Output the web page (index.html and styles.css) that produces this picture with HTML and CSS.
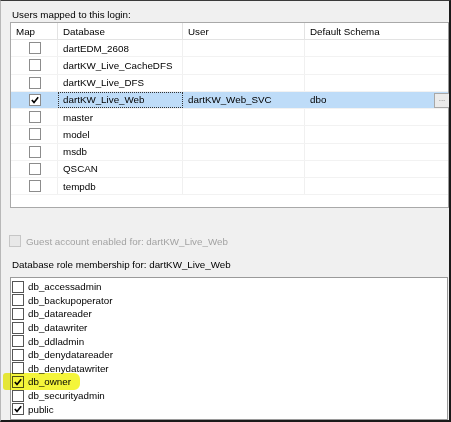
FILE: index.html
```html
<!DOCTYPE html>
<html lang="en">
<head>
    <meta charset="UTF-8">
    <title>Login Properties - User Mapping</title>
    <link rel="stylesheet" href="styles.css">
</head>
<body>
    <div class="window">
        <div class="caption">Users mapped to this login:</div>

        <!-- Mapping grid -->
        <div class="grid">
            <div class="row head">
                <div class="cell">Map</div>
                <div class="cell">Database</div>
                <div class="cell">User</div>
                <div class="cell">Default Schema</div>
            </div>
            <div class="row">
                <div class="cell map"><span class="box"></span></div>
                <div class="cell">dartEDM_2608</div>
                <div class="cell"></div>
                <div class="cell"></div>
            </div>
            <div class="row">
                <div class="cell map"><span class="box"></span></div>
                <div class="cell">dartKW_Live_CacheDFS</div>
                <div class="cell"></div>
                <div class="cell"></div>
            </div>
            <div class="row">
                <div class="cell map"><span class="box"></span></div>
                <div class="cell">dartKW_Live_DFS</div>
                <div class="cell"></div>
                <div class="cell"></div>
            </div>
            <div class="row selected">
                <div class="cell map"><span class="box"><svg viewBox="0 0 10 10"><polyline points="1.8,5 4,7.4 8.2,2.2"/></svg></span></div>
                <div class="cell focus">dartKW_Live_Web</div>
                <div class="cell">dartKW_Web_SVC</div>
                <div class="cell schema">dbo<span class="more">...</span></div>
            </div>
            <div class="row">
                <div class="cell map"><span class="box"></span></div>
                <div class="cell">master</div>
                <div class="cell"></div>
                <div class="cell"></div>
            </div>
            <div class="row">
                <div class="cell map"><span class="box"></span></div>
                <div class="cell">model</div>
                <div class="cell"></div>
                <div class="cell"></div>
            </div>
            <div class="row">
                <div class="cell map"><span class="box"></span></div>
                <div class="cell">msdb</div>
                <div class="cell"></div>
                <div class="cell"></div>
            </div>
            <div class="row">
                <div class="cell map"><span class="box"></span></div>
                <div class="cell">QSCAN</div>
                <div class="cell"></div>
                <div class="cell"></div>
            </div>
            <div class="row">
                <div class="cell map"><span class="box"></span></div>
                <div class="cell">tempdb</div>
                <div class="cell"></div>
                <div class="cell"></div>
            </div>
        </div>

        <div class="guest">
            <span class="box disabled"></span>
            <span>Guest account enabled for: dartKW_Live_Web</span>
        </div>

        <div class="caption roles-caption">Database role membership for: dartKW_Live_Web</div>

        <!-- Role list -->
        <div class="roles">
            <div class="role"><span class="box"></span><span>db_accessadmin</span></div>
            <div class="role"><span class="box"></span><span>db_backupoperator</span></div>
            <div class="role"><span class="box"></span><span>db_datareader</span></div>
            <div class="role"><span class="box"></span><span>db_datawriter</span></div>
            <div class="role"><span class="box"></span><span>db_ddladmin</span></div>
            <div class="role"><span class="box"></span><span>db_denydatareader</span></div>
            <div class="role"><span class="box"></span><span>db_denydatawriter</span></div>
            <div class="role marked"><span class="box"><svg viewBox="0 0 10 10"><polyline points="1.8,5 4,7.4 8.2,2.2"/></svg></span><span>db_owner</span></div>
            <div class="role"><span class="box"></span><span>db_securityadmin</span></div>
            <div class="role"><span class="box"><svg viewBox="0 0 10 10"><polyline points="1.8,5 4,7.4 8.2,2.2"/></svg></span><span>public</span></div>
        </div>
    </div>
</body>
</html>
```

FILE: styles.css
```css
* {
    box-sizing: border-box;
}
body {
    margin: 0;
    font-family: "Liberation Sans", Arial, sans-serif;
    font-size: 9.8px;
    color: #000;
    background: #fff;
}
.window {
    width: 451px;
    height: 422px;
    display: flex;
    flex-direction: column;
    background: #f0f0f0;
    border-top: 1px solid #3a3a3a;
    border-left: 1px solid #b8b8b8;
    border-right: 2px solid #1a1a1a;
    border-bottom: 2px solid #1a1a1a;
    overflow: hidden;
}
.caption {
    margin: 8px 0 0 11px;
    line-height: 12px;
    height: 12px;
}

/* grid */
.grid {
    margin: 1px 0 0 9px;
    height: 186px;
    background: #fff;
    border: 1px solid #a9a9a9;
    border-right-color: #9a9a9a;
}
.row {
    display: grid;
    grid-template-columns: 47px 125px 122px 1fr;
    height: 17.25px;
    border-bottom: 1px solid #f2f2f2;
}
.row.head {
    height: 17px;
    border-bottom: 1px solid #e3e3e3;
}
.cell {
    display: flex;
    align-items: center;
    padding-left: 5px;
    border-right: 1px solid #f0f0f0;
    white-space: nowrap;
}
.head .cell {
    border-right-color: #e3e3e3;
}
.cell:last-child {
    border-right: none;
}
.cell.map {
    padding-left: 18px;
}
.selected {
    background: #bedcf8;
}
.selected .cell {
    border-right-color: #bedcf8;
}
.cell.focus {
    outline: 1px dotted #333;
    outline-offset: -1px;
}
.cell.schema {
    position: relative;
}
.more {
    position: absolute;
    right: -2px;
    top: 1px;
    width: 16px;
    height: 15px;
    background: #ebebeb;
    border: 1px solid #a8a8a8;
    color: #777;
    font-size: 8px;
    line-height: 10px;
    text-align: center;
}

/* checkboxes */
.box {
    flex: none;
    display: inline-block;
    width: 12px;
    height: 12px;
    background: #fff;
    border: 1px solid #8c8c8c;
}
.box svg {
    display: block;
    width: 10px;
    height: 10px;
    fill: none;
    stroke: #000;
    stroke-width: 1.6;
}
.box.disabled {
    background: #e8e8e8;
    border-color: #c6c6c6;
}

.guest {
    display: flex;
    align-items: center;
    gap: 5px;
    margin: 27px 0 0 8px;
    height: 12px;
    color: #a3a3a3;
}
.roles-caption {
    margin-top: 12px;
}

/* role list */
.roles {
    flex: 1;
    margin: 6px 1px 0 9px;
    padding-top: 2px;
    background: #fff;
    border: 1px solid #9a9a9a;
}
.role {
    position: relative;
    display: flex;
    align-items: center;
    gap: 4px;
    height: 13.6px;
    padding-left: 1px;
}
.role .box {
    border-color: #555;
}
.role.marked::after {
    content: "";
    position: absolute;
    left: -8px;
    top: -2px;
    width: 77px;
    height: 17px;
    background: #f4f53a;
    border-radius: 3px 6px 6px 3px;
    mix-blend-mode: multiply;
}
```
